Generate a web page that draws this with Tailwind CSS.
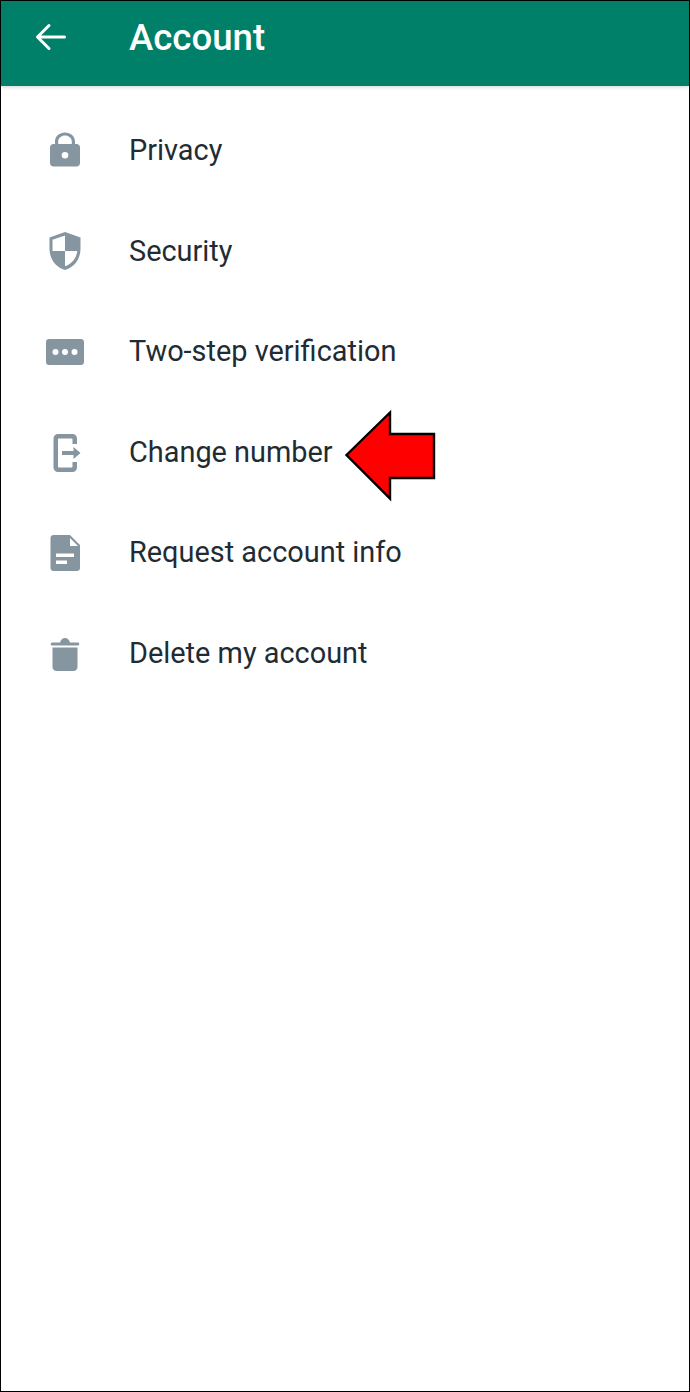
<!DOCTYPE html>
<html lang="en">
<head>
  <meta charset="UTF-8" />
  <title>Account</title>
  <script src="https://cdn.jsdelivr.net/npm/@tailwindcss/browser@4"></script>
</head>
<body class="bg-white font-['Roboto',sans-serif] text-[#1f2c34]">
  <div class="relative w-[690px] h-[1392px] border border-black overflow-hidden bg-white">
    <header class="h-[85px] bg-[#008069] flex items-center text-white shadow-[0_1px_4px_rgba(0,0,0,0.18)]">
      <div class="w-[128px] shrink-0 pl-[33px] -mt-[14px]">
        <svg class="block" width="34" height="30" viewBox="0 0 34 30" fill="none" stroke="white" stroke-width="3" stroke-linecap="round" stroke-linejoin="round"><path d="M30.500 15H4M15 3.500 3.500 15 15 26.500"/></svg>
      </div>
      <h1 class="text-[36.6px] font-medium -mt-[11px] leading-none">Account</h1>
    </header>

    <ul class="pt-[14.5px] text-[28.9px]">
      <li class="h-[100.6px] flex items-center">
        <div class="w-[128px] shrink-0 pl-[44px]">
          <svg class="block" width="40" height="40" viewBox="0 0 40 40" fill="#8696a0"><path fill-rule="evenodd" d="M10 13v-2.500C10 5 14.500 1.500 20 1.500S30 5 30 10.500V13h1.500C33.500 13 35 14.500 35 16.500V32c0 2-1.500 3.500-3.500 3.500h-23C6.500 35.500 5 34 5 32V16.500C5 14.500 6.500 13 8.500 13H10Zm3.200 0h13.600v-2.500c0-3.500-3.300-6-6.800-6s-6.800 2.500-6.800 6V13ZM20 21a3.300 3.300 0 1 0 0 6.600 3.300 3.300 0 0 0 0-6.600Z"/></svg>
        </div>
        <span>Privacy</span>
      </li>
      <li class="h-[100.6px] flex items-center">
        <div class="w-[128px] shrink-0 pl-[44px]">
          <svg class="block" width="40" height="40" viewBox="0 0 40 40" fill="#8696a0"><path fill-rule="evenodd" d="M20 1 4.500 6.500V18c0 10 6.500 18.500 15.500 21 9-2.500 15.500-11 15.500-21V6.500L20 1Zm0 3.500V20H7.500V8.800L20 4.500ZM20 20h12.300c-.8 7.700-6.300 13.300-12.300 15.300V20Z"/></svg>
        </div>
        <span>Security</span>
      </li>
      <li class="h-[100.6px] flex items-center">
        <div class="w-[128px] shrink-0 pl-[44px]">
          <svg class="block" width="40" height="40" viewBox="0 0 40 40" fill="#8696a0"><path fill-rule="evenodd" d="M4 7h32c1.700 0 3 1.300 3 3v20c0 1.700-1.300 3-3 3H4c-1.700 0-3-1.300-3-3V10c0-1.700 1.300-3 3-3Zm6.500 10a3 3 0 1 0 0 6 3 3 0 0 0 0-6Zm9.500 0a3 3 0 1 0 0 6 3 3 0 0 0 0-6Zm9.500 0a3 3 0 1 0 0 6 3 3 0 0 0 0-6Z"/></svg>
        </div>
        <span>Two-step verification</span>
      </li>
      <li class="h-[100.6px] flex items-center">
        <div class="w-[128px] shrink-0 pl-[44px]">
          <svg class="block" width="40" height="40" viewBox="0 0 40 40" fill="#8696a0"><path d="M13 1h14.500c2.500 0 4.500 2 4.500 4.500V11h-4.500V6.500c0-.6-.4-1-1-1H14c-.6 0-1 .4-1 1v27c0 .6.400 1 1 1h12.500c.6 0 1-.4 1-1V29H32v5.500c0 2.500-2 4.500-4.500 4.500H13c-2.500 0-4.500-2-4.500-4.500v-29C8.500 3 10.500 1 13 1Z"/><path d="M17 18h11.500v-4l7 6-7 6v-4H17Z"/></svg>
        </div>
        <span>Change number</span>
      </li>
      <li class="h-[100.6px] flex items-center">
        <div class="w-[128px] shrink-0 pl-[44px]">
          <svg class="block" width="40" height="40" viewBox="0 0 40 40" fill="#8696a0"><path fill-rule="evenodd" d="M8.500 2H25l10 10v23c0 1.700-1.300 3-3 3H8.500c-1.700 0-3-1.300-3-3V5c0-1.700 1.300-3 3-3ZM25 5v8h8ZM11 20.500v3.500h18v-3.500Zm0 7v3.500h11v-3.500Z"/></svg>
        </div>
        <span>Request account info</span>
      </li>
      <li class="h-[100.6px] flex items-center">
        <div class="w-[128px] shrink-0 pl-[44px]">
          <svg class="block" width="40" height="40" viewBox="0 0 40 40" fill="#8696a0"><path d="M7 11.500c-.8 0-1.300-.6-1.300-1.400S6.200 8.500 7 8.500h8C16 5.500 17.500 4 20 4s4 1.500 5 4.500h8c.8 0 1.300.7 1.300 1.600S33.800 11.500 33 11.500Z"/><path d="M7.500 13.500h25V33c0 2-1.700 4-4 4h-17c-2.300 0-4-2-4-4Z"/></svg>
        </div>
        <span>Delete my account</span>
      </li>
    </ul>

    <svg class="absolute left-[344px] top-[408px]" width="92" height="94" viewBox="0 0 92 94"><path d="M1.500 46 45 3.500V25H89V69H45V89.500Z" fill="#ff0000" stroke="black" stroke-width="2.400" stroke-linejoin="miter"/></svg>
  </div>
</body>
</html>
